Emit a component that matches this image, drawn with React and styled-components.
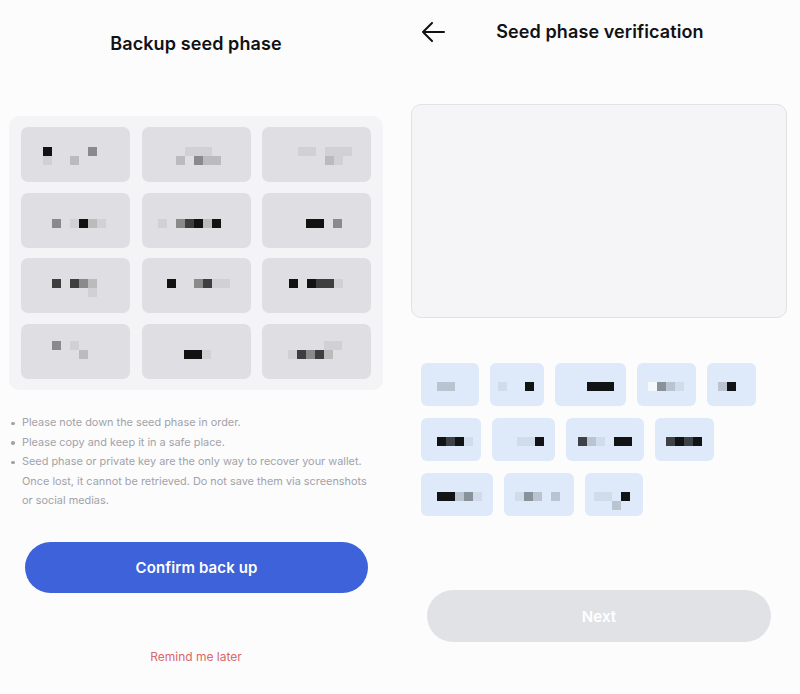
import React from 'react'
import styled, { createGlobalStyle } from 'styled-components';

const GlobalStyle = createGlobalStyle`
  html, body {
    margin: 0;
    padding: 0;
    background: #fcfcfd;
    font-family: Inter, "Noto Sans", "Liberation Sans", sans-serif;
  }
`;

const SHADES = {
  k: 'rgba(0,0,0,0.92)',
  d: 'rgba(0,0,0,0.72)',
  g: 'rgba(0,0,0,0.38)',
  l: 'rgba(0,0,0,0.16)',
  f: 'rgba(0,0,0,0.06)',
  w: 'rgba(255,255,255,0.7)',
};

// blurred-out words, drawn as mosaic blocks: [left, top, rows]
const seedWords = [
  [22, 20, ['k....g', 'f..l..']],
  [34, 20, ['.fff.', 'l.gll']],
  [36, 20, ['ff.fff', '...lf.']],
  [31, 26, ['g.fklf']],
  [16, 26, ['f.gdklk']],
  [44, 26, ['kk.g']],
  [31, 21, ['d.dgl', '....f']],
  [25, 21, ['k..gdff']],
  [27, 21, ['k.kddf']],
  [31, 17, ['g.f', '...l']],
  [42, 26, ['kkf']],
  [26, 17, ['....ff', 'fdgdl']],
];

const chipRows = [
  [
    [58, 16, ['ll']],
    [54, 8, ['f..k']],
    [71, 32, ['kkk']],
    [59, 11, ['wglf']],
    [49, 11, ['lk']],
  ],
  [
    [60, 16, ['kdkf']],
    [63, 25, ['ffk']],
    [78, 12, ['dlf.kk']],
    [59, 11, ['dkdk']],
  ],
  [
    [72, 16, ['kklgf']],
    [70, 11, ['fgl.l']],
    [58, 9, ['ff.k', '..l.']],
  ],
];

const Page = styled.div`
  display: flex;
  gap: 8px;
  width: 800px;
  height: 694px;
  overflow: hidden;
`;

const Screen = styled.section`
  width: ${p => p.$width}px;
  flex-shrink: 0;
  display: flex;
  flex-direction: column;
`;

const Title = styled.h1`
  margin: 0;
  padding-top: 30px;
  font-size: 18px;
  line-height: 28px;
  font-weight: 600;
  color: #111114;
  text-align: center;
  letter-spacing: 0.1px;
`;

const WordBoard = styled.div`
  margin: 58px 0 0 9px;
  width: 374px;
  box-sizing: border-box;
  padding: 11px 12px;
  background: #f4f4f6;
  border-radius: 10px;
  display: grid;
  grid-template-columns: repeat(3, 109px);
  grid-auto-rows: 55px;
  column-gap: 11.5px;
  row-gap: 10.7px;
`;

const WordCell = styled.div`
  background: #dfdfe3;
  border-radius: 7px;
  overflow: hidden;
`;

const Notes = styled.ul`
  margin: 23px 0 0;
  padding: 0 0 0 22px;
  list-style: none;
  font-size: 10.9px;
  line-height: 19.5px;
  color: #a2a2a8;
  width: 350px;
`;

const Note = styled.li`
  position: relative;
  &::before {
    content: '';
    position: absolute;
    left: -11px;
    top: 8.5px;
    width: 3.5px;
    height: 3.5px;
    border-radius: 50%;
    background: #a2a2a8;
  }
`;

const PillButton = styled.button`
  margin: ${p => p.$top}px 0 0 ${p => p.$left}px;
  width: ${p => p.$width}px;
  height: ${p => p.$height}px;
  border: none;
  border-radius: 26px;
  background: ${p => (p.$disabled ? '#e1e2e6' : '#3d62d9')};
  color: #ffffff;
  font-family: inherit;
  font-size: 15px;
  font-weight: 600;
  letter-spacing: 0.1px;
  padding: 0;
`;

const LaterLink = styled.div`
  margin-top: 56px;
  text-align: center;
  font-size: 12px;
  line-height: 16px;
  color: #d9676b;
`;

const Header = styled.header`
  display: grid;
  grid-template-columns: 1fr auto 1fr;
  align-items: center;
  height: 28px;
  padding-top: 18px;
`;

const BackIcon = styled.svg`
  margin-left: 21px;
  display: block;
`;

const HeaderTitle = styled(Title)`
  padding-top: 0;
`;

const InputBox = styled.div`
  margin: 58px 0 0 11px;
  width: 376px;
  height: 214px;
  box-sizing: border-box;
  background: #f5f5f7;
  border: 1px solid #e2e2e5;
  border-radius: 10px;
`;

const ChipArea = styled.div`
  margin: 45px 0 0 21px;
  display: flex;
  flex-direction: column;
  gap: 12px;
`;

const ChipRow = styled.div`
  display: flex;
  gap: 11px;
`;

const Chip = styled.div`
  width: ${p => p.$width}px;
  height: 43px;
  background: #deeaf9;
  border-radius: 6px;
  overflow: hidden;
`;

function Mosaic({ left, top, rows, w, h }) {
  const size = 9;
  return (
    <svg width={w} height={h} style={{ display: 'block' }}>
      {rows.map((row, j) =>
        row.split('').map((c, i) =>
          SHADES[c] ? (
            <rect key={`${i}-${j}`} x={left + i * size} y={top + j * size} width={size} height={size} fill={SHADES[c]} />
          ) : null
        )
      )}
    </svg>
  );
}

export default function App() {
  return (
    <Page>
      <GlobalStyle />
      <Screen $width={392}>
        <Title>Backup seed phase</Title>
        <WordBoard>
          {seedWords.map(([left, top, rows], i) => (
            <WordCell key={i}>
              <Mosaic left={left} top={top} rows={rows} w={109} h={55} />
            </WordCell>
          ))}
        </WordBoard>
        <Notes>
          <Note>Please note down the seed phase in order.</Note>
          <Note>Please copy and keep it in a safe place.</Note>
          <Note>
            Seed phase or private key are the only way to recover your wallet.
            Once lost, it cannot be retrieved. Do not save them via screenshots
            or social medias.
          </Note>
        </Notes>
        <PillButton $top={31} $left={25} $width={343} $height={51}>Confirm back up</PillButton>
        <LaterLink>Remind me later</LaterLink>
      </Screen>
      <Screen $width={400}>
        <Header>
          <BackIcon width="24" height="20" viewBox="0 0 24 20">
            <path d="M23 10H2M11 1L2 10L11 19" fill="none" stroke="#111" strokeWidth="2" strokeLinecap="round" strokeLinejoin="round" />
          </BackIcon>
          <HeaderTitle>Seed phase verification</HeaderTitle>
          <span />
        </Header>
        <InputBox />
        <ChipArea>
          {chipRows.map((row, r) => (
            <ChipRow key={r}>
              {row.map(([width, left, rows], i) => (
                <Chip key={i} $width={width}>
                  <Mosaic left={left} top={19} rows={rows} w={width} h={43} />
                </Chip>
              ))}
            </ChipRow>
          ))}
        </ChipArea>
        <PillButton $top={74} $left={27} $width={344} $height={52} $disabled>Next</PillButton>
      </Screen>
    </Page>
  );
}
